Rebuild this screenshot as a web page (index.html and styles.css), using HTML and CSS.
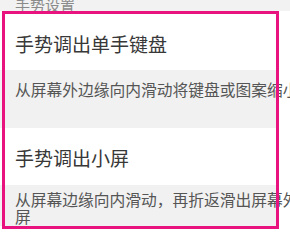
FILE: index.html
```html
<!DOCTYPE html>
<html lang="zh-CN">
<head>
<meta charset="utf-8">
<link rel="stylesheet" href="styles.css">
</head>
<body>
<div class="page">
  <div class="section-header"><span>手势设置</span></div>
  <div class="item-title">手势调出单手键盘</div>
  <div class="item-desc desc-tall">从屏幕外边缘向内滑动将键盘或图案缩小</div>
  <div class="item-title second">手势调出小屏</div>
  <div class="item-desc desc-wrap">从屏幕边缘向内滑动，再折返滑出屏幕外，可调出小屏</div>
</div>
<div class="frame"></div>
</body>
</html>
```
FILE: styles.css
```css
html, body {
  margin: 0;
  padding: 0;
}
body {
  width: 290px;
  height: 237px;
  overflow: hidden;
  background: #ffffff;
  font-family: "Noto Sans CJK SC", "Noto Sans", sans-serif;
  position: relative;
}
.page {
  width: 400px;
}
.section-header {
  height: 11px;
  background: #f2f2f2;
  overflow: hidden;
  display: flex;
  align-items: flex-end;
  padding-left: 15px;
}
.section-header span {
  font-size: 15px;
  line-height: 18px;
  color: #8a8a8a;
  margin-bottom: -3px;
}
.item-title {
  background: #ffffff;
  color: #383838;
  font-size: 19px;
  line-height: 24px;
  padding: 21px 15px 14px;
}
.item-title.second {
  padding: 18px 15px 15px;
}
.item-desc {
  background: linear-gradient(#f1f1f1, #f1f1f1) no-repeat 0 0 / 277px 100%;
  color: #555555;
  font-size: 15.75px;
  padding: 0 15px;
}
.desc-tall {
  line-height: 20px;
  padding-top: 10px;
  padding-bottom: 28px;
  white-space: nowrap;
}
.desc-wrap {
  width: 370px;
  line-height: 17px;
  padding-top: 6px;
  padding-bottom: 1px;
}
.frame {
  position: absolute;
  left: 2px;
  top: 11px;
  width: 277px;
  height: 218px;
  box-sizing: border-box;
  border: 3.5px solid #e8137f;
}
```
